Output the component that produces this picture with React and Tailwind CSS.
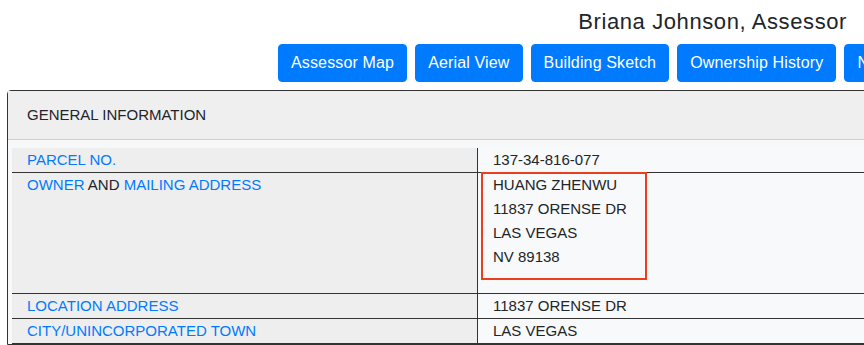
import React from 'react';

const buttons = ['Assessor Map', 'Aerial View', 'Building Sketch', 'Ownership History', 'Neighborhood Sales'];

const Label = ({ children }) => <span className="text-[#007bff]">{children}</span>;

const Row = ({ label, children, className = '' }) => (
  <div className="grid grid-cols-[465px_1fr] border-b border-[#333]">
    <div className="bg-[#eeeeee] pl-[15px]">{label}</div>
    <div className={`relative bg-[#f8f9fa] pl-[15px] border-l border-[#333] ${className}`}>{children}</div>
  </div>
);

export default function App() {
  return (
    <div className="h-[345px] w-full overflow-hidden bg-white text-[#212529] font-['Liberation_Sans',Arial,sans-serif]">
      {/* Title */}
      <div className="flex justify-end pr-[17px] pt-[9px]">
        <h1 className="text-[22px] leading-[26px] font-medium tracking-[0.6px]">Briana Johnson, Assessor</h1>
      </div>

      {/* Action buttons */}
      <div className="mt-[9px] flex gap-2 pl-[278px] whitespace-nowrap">
        {buttons.map((b) => (
          <button
            key={b}
            className="shrink-0 rounded-[4px] border border-[#007bff] bg-[#007bff] px-3 py-[6px] text-[16px] leading-6 tracking-[0.15px] text-white"
          >
            {b}
          </button>
        ))}
      </div>

      {/* General information card */}
      <div className="ml-[7px] mt-[8px] w-[900px] rounded-tl-[4px] border border-[#333]">
        <div className="border-b border-[#cfcfcf] bg-[#efeff0] py-3 pl-[19px] text-[15px] leading-6">
          GENERAL INFORMATION
        </div>
        <div className="bg-[#f7f8f9] pt-2 pl-[4px] text-[15px] leading-6">
          <Row label={<Label>PARCEL NO.</Label>}>137-34-816-077</Row>
          <Row
            label={
              <>
                <Label>OWNER</Label> AND <Label>MAILING ADDRESS</Label>
              </>
            }
            className="pb-6"
          >
            <div>HUANG ZHENWU</div>
            <div>11837 ORENSE DR</div>
            <div>LAS VEGAS</div>
            <div>NV 89138</div>
            <div className="absolute left-[3px] top-[-1px] h-[108px] w-[166px] border-2 border-[#ea3e1f]" />
          </Row>
          <Row label={<Label>LOCATION ADDRESS</Label>}>11837 ORENSE DR</Row>
          <Row label={<Label>CITY/UNINCORPORATED TOWN</Label>}>LAS VEGAS</Row>
        </div>
      </div>
    </div>
  );
}
